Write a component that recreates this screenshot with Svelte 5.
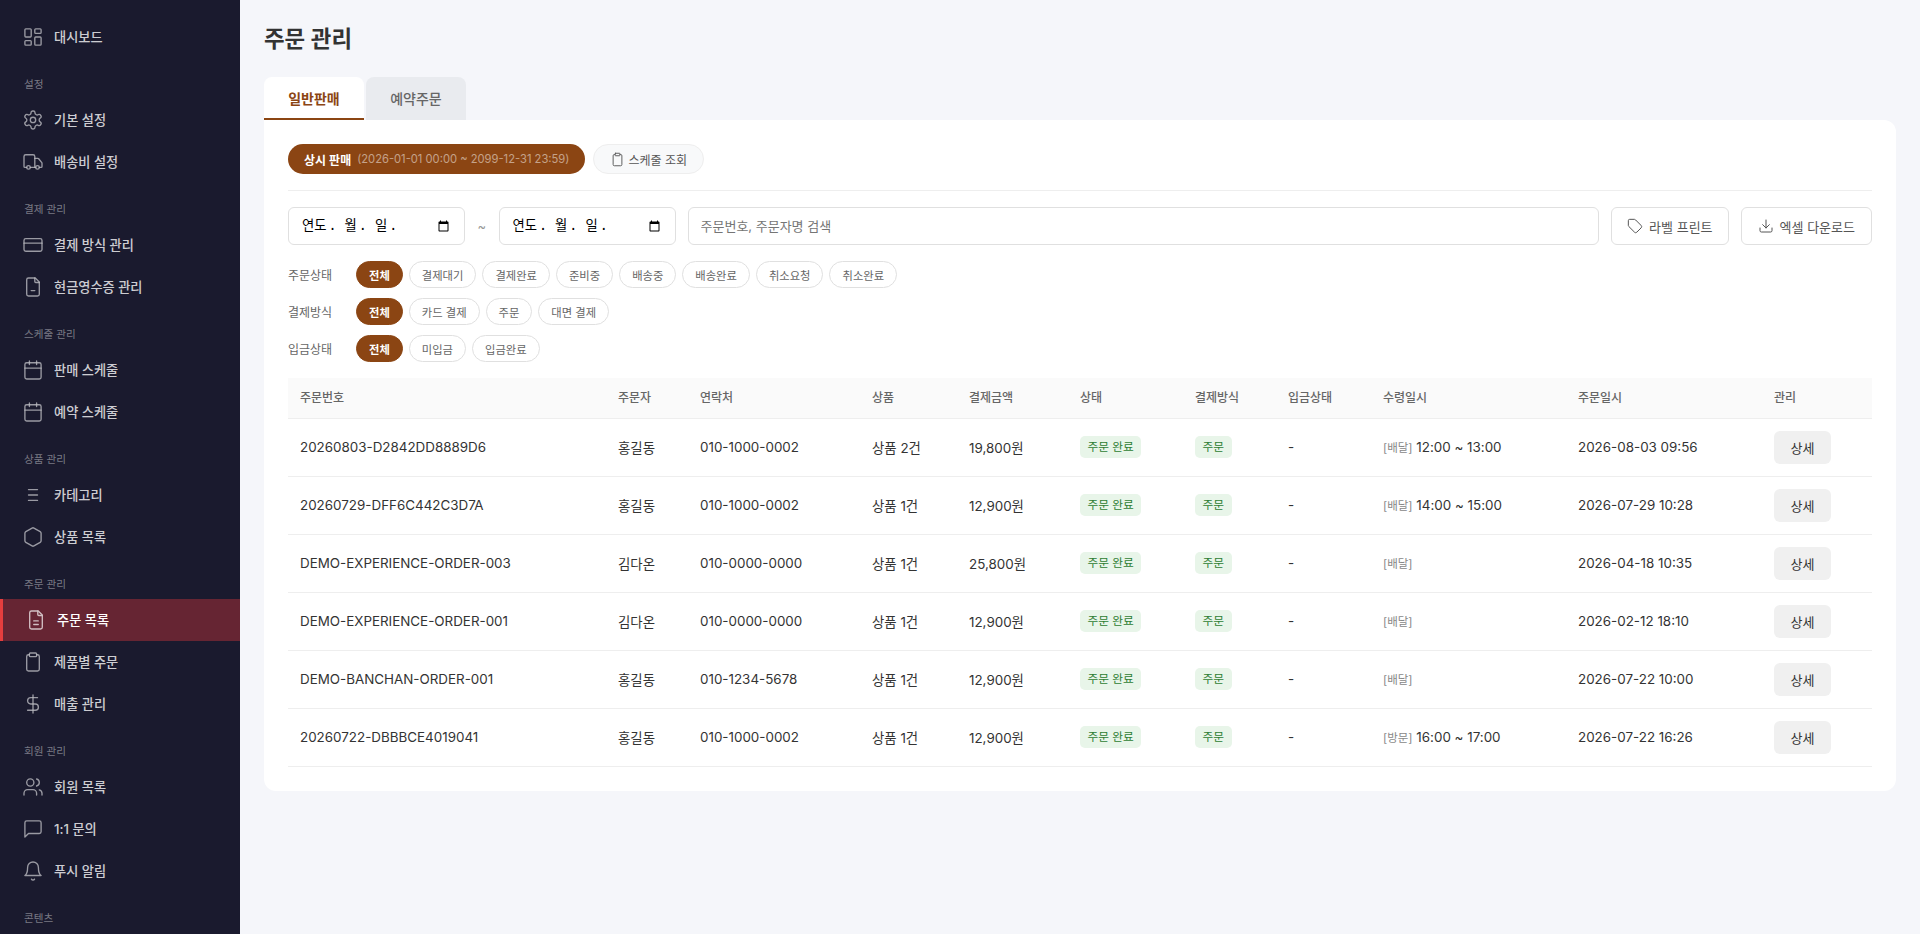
<script>
	const icons = {
		dashboard: '<rect x="3" y="3" width="7" height="9" rx="1"/><rect x="14" y="3" width="7" height="5" rx="1"/><rect x="14" y="12" width="7" height="9" rx="1"/><rect x="3" y="16" width="7" height="5" rx="1"/>',
		gear: '<path d="M12.22 2h-.44a2 2 0 0 0-2 2v.18a2 2 0 0 1-1 1.73l-.43.25a2 2 0 0 1-2 0l-.15-.08a2 2 0 0 0-2.73.73l-.22.38a2 2 0 0 0 .73 2.73l.15.1a2 2 0 0 1 1 1.72v.51a2 2 0 0 1-1 1.74l-.15.09a2 2 0 0 0-.73 2.73l.22.38a2 2 0 0 0 2.73.73l.15-.08a2 2 0 0 1 2 0l.43.25a2 2 0 0 1 1 1.73V20a2 2 0 0 0 2 2h.44a2 2 0 0 0 2-2v-.18a2 2 0 0 1 1-1.73l.43-.25a2 2 0 0 1 2 0l.15.08a2 2 0 0 0 2.73-.73l.22-.39a2 2 0 0 0-.73-2.73l-.15-.08a2 2 0 0 1-1-1.74v-.5a2 2 0 0 1 1-1.74l.15-.09a2 2 0 0 0 .73-2.73l-.22-.38a2 2 0 0 0-2.73-.73l-.15.08a2 2 0 0 1-2 0l-.43-.25a2 2 0 0 1-1-1.73V4a2 2 0 0 0-2-2z"/><circle cx="12" cy="12" r="3"/>',
		truck: '<path d="M14 18V6a2 2 0 0 0-2-2H4a2 2 0 0 0-2 2v11a1 1 0 0 0 1 1h2"/><path d="M15 18H9"/><path d="M19 18h2a1 1 0 0 0 1-1v-3.65a1 1 0 0 0-.22-.62l-3.48-4.35A1 1 0 0 0 17.52 8H14"/><circle cx="17" cy="18" r="2"/><circle cx="7" cy="18" r="2"/>',
		card: '<rect x="2" y="5" width="20" height="14" rx="2"/><path d="M2 10h20"/>',
		receipt: '<path d="M14.5 2H7a2 2 0 0 0-2 2v16a2 2 0 0 0 2 2h10a2 2 0 0 0 2-2V6.5z"/><path d="M14 2v4a1 1 0 0 0 1 1h4"/><path d="M10 16h4"/>',
		calendar: '<path d="M8 2v4"/><path d="M16 2v4"/><rect x="3" y="4" width="18" height="18" rx="2"/><path d="M3 10h18"/>',
		list: '<path d="M7 6h10"/><path d="M7 12h10"/><path d="M7 18h10"/>',
		box: '<path d="M21 16.2V7.8a2 2 0 0 0-1-1.73l-7-4a2 2 0 0 0-2 0l-7 4a2 2 0 0 0-1 1.73v8.4a2 2 0 0 0 1 1.73l7 4a2 2 0 0 0 2 0l7-4a2 2 0 0 0 1-1.73z"/>',
		file: '<path d="M14.5 2H7a2 2 0 0 0-2 2v16a2 2 0 0 0 2 2h10a2 2 0 0 0 2-2V6.5z"/><path d="M14 2v4a1 1 0 0 0 1 1h4"/><path d="M9.5 13h5"/><path d="M9.5 17h5"/>',
		clipboard: '<rect x="8" y="2" width="8" height="4" rx="1"/><path d="M16 4h1a2 2 0 0 1 2 2v14a2 2 0 0 1-2 2H7a2 2 0 0 1-2-2V6a2 2 0 0 1 2-2h1"/>',
		dollar: '<path d="M12 2v20"/><path d="M17 5H9.5a3.5 3.5 0 0 0 0 7h5a3.5 3.5 0 0 1 0 7H6"/>',
		users: '<path d="M16 21v-2a4 4 0 0 0-4-4H6a4 4 0 0 0-4 4v2"/><circle cx="9" cy="7" r="4"/><path d="M22 21v-2a4 4 0 0 0-3-3.87"/><path d="M16 3.13a4 4 0 0 1 0 7.75"/>',
		chat: '<path d="M21 15a2 2 0 0 1-2 2H7l-4 4V5a2 2 0 0 1 2-2h14a2 2 0 0 1 2 2z"/>',
		bell: '<path d="M10.3 21a1.94 1.94 0 0 0 3.4 0"/><path d="M6 8a6 6 0 0 1 12 0c0 7 3 9 3 9H3s3-2 3-9"/>',
		tag: '<path d="M12.6 2.6A2 2 0 0 0 11.2 2H4a2 2 0 0 0-2 2v7.2a2 2 0 0 0 .6 1.4l8.7 8.7a2.4 2.4 0 0 0 3.4 0l6.6-6.6a2.4 2.4 0 0 0 0-3.4z"/>',
		download: '<path d="M21 15v4a2 2 0 0 1-2 2H5a2 2 0 0 1-2-2v-4"/><path d="M7 10l5 5 5-5"/><path d="M12 15V3"/>'
	};

	const menu = [
		{ items: [{ icon: 'dashboard', label: '대시보드' }] },
		{ title: '설정', items: [{ icon: 'gear', label: '기본 설정' }, { icon: 'truck', label: '배송비 설정' }] },
		{ title: '결제 관리', items: [{ icon: 'card', label: '결제 방식 관리' }, { icon: 'receipt', label: '현금영수증 관리' }] },
		{ title: '스케줄 관리', items: [{ icon: 'calendar', label: '판매 스케줄' }, { icon: 'calendar', label: '예약 스케줄' }] },
		{ title: '상품 관리', items: [{ icon: 'list', label: '카테고리' }, { icon: 'box', label: '상품 목록' }] },
		{ title: '주문 관리', items: [{ icon: 'file', label: '주문 목록', active: true }, { icon: 'clipboard', label: '제품별 주문' }, { icon: 'dollar', label: '매출 관리' }] },
		{ title: '회원 관리', items: [{ icon: 'users', label: '회원 목록' }, { icon: 'chat', label: '1:1 문의' }, { icon: 'bell', label: '푸시 알림' }] },
		{ title: '콘텐츠', items: [] }
	];

	const filters = [
		{ label: '주문상태', options: ['전체', '결제대기', '결제완료', '준비중', '배송중', '배송완료', '취소요청', '취소완료'] },
		{ label: '결제방식', options: ['전체', '카드 결제', '주문', '대면 결제'] },
		{ label: '입금상태', options: ['전체', '미입금', '입금완료'] }
	];

	const columns = ['주문번호', '주문자', '연락처', '상품', '결제금액', '상태', '결제방식', '입금상태', '수령일시', '주문일시', '관리'];
	const widths = [318, 82, 172, 97, 111, 115, 93, 95, 195, 196, 110];

	const orders = [
		{ no: '20260803-D2842DD8889D6', name: '홍길동', phone: '010-1000-0002', goods: '상품 2건', amount: '19,800원', kind: '배달', time: '12:00 ~ 13:00', at: '2026-08-03 09:56' },
		{ no: '20260729-DFF6C442C3D7A', name: '홍길동', phone: '010-1000-0002', goods: '상품 1건', amount: '12,900원', kind: '배달', time: '14:00 ~ 15:00', at: '2026-07-29 10:28' },
		{ no: 'DEMO-EXPERIENCE-ORDER-003', name: '김다온', phone: '010-0000-0000', goods: '상품 1건', amount: '25,800원', kind: '배달', time: '', at: '2026-04-18 10:35' },
		{ no: 'DEMO-EXPERIENCE-ORDER-001', name: '김다온', phone: '010-0000-0000', goods: '상품 1건', amount: '12,900원', kind: '배달', time: '', at: '2026-02-12 18:10' },
		{ no: 'DEMO-BANCHAN-ORDER-001', name: '홍길동', phone: '010-1234-5678', goods: '상품 1건', amount: '12,900원', kind: '배달', time: '', at: '2026-07-22 10:00' },
		{ no: '20260722-DBBBCE4019041', name: '홍길동', phone: '010-1000-0002', goods: '상품 1건', amount: '12,900원', kind: '방문', time: '16:00 ~ 17:00', at: '2026-07-22 16:26' }
	];
</script>

<div class="layout">
	<aside class="sidebar">
		{#each menu as group}
			{#if group.title}
				<div class="group-title">{group.title}</div>
			{/if}
			{#each group.items as item}
				<div class="nav-item" class:active={item.active}>
					<svg class="nav-icon" viewBox="2 2 20 20">{@html icons[item.icon]}</svg>
					<span>{item.label}</span>
				</div>
			{/each}
		{/each}
	</aside>

	<main class="main">
		<h1>주문 관리</h1>

		<div class="tabs">
			<button class="tab selected">일반판매</button>
			<button class="tab">예약주문</button>
		</div>

		<section class="card">
			<div class="schedule-row">
				<div class="schedule-pill"><strong>상시 판매</strong><span>(2026-01-01 00:00 ~ 2099-12-31 23:59)</span></div>
				<button class="schedule-btn">
					<svg viewBox="0 0 24 24">{@html icons.clipboard}</svg>
					스케줄 조회
				</button>
			</div>

			<div class="search-row">
				{#each [0, 1] as i}
					{#if i}<span class="tilde">~</span>{/if}
					<label class="date">
						<input type="date" />
						<!-- the sandbox browser has no Korean locale, so the field text sits over the native input -->
						<span class="date-text"><i>연도</i>. <i>월</i>. <i>일</i>.</span>
					</label>
				{/each}
				<input class="search" type="text" placeholder="주문번호, 주문자명 검색" />
				<button class="action">
					<svg viewBox="0 0 24 24">{@html icons.tag}</svg>
					라벨 프린트
				</button>
				<button class="action excel">
					<svg viewBox="0 0 24 24">{@html icons.download}</svg>
					엑셀 다운로드
				</button>
			</div>

			{#each filters as filter}
				<div class="filter-row">
					<span class="filter-label">{filter.label}</span>
					{#each filter.options as option, i}
						<button class="chip" class:on={i === 0}>{option}</button>
					{/each}
				</div>
			{/each}

			<table>
				<colgroup>
					{#each widths as w}
						<col style="width: {w}px" />
					{/each}
				</colgroup>
				<thead>
					<tr>
						{#each columns as column}
							<th>{column}</th>
						{/each}
					</tr>
				</thead>
				<tbody>
					{#each orders as order}
						<tr>
							<td>{order.no}</td>
							<td>{order.name}</td>
							<td>{order.phone}</td>
							<td>{order.goods}</td>
							<td>{order.amount}</td>
							<td><span class="badge">주문 완료</span></td>
							<td><span class="badge">주문</span></td>
							<td>-</td>
							<td><span class="kind">[{order.kind}]</span> {order.time}</td>
							<td>{order.at}</td>
							<td><button class="detail">상세</button></td>
						</tr>
					{/each}
				</tbody>
			</table>
		</section>
	</main>
</div>

<style>
	:global(body) {
		margin: 0;
		font-family: "Inter", "Noto Sans CJK KR", sans-serif;
		color: #333;
		background: #f5f6fa;
	}

	button {
		font-family: inherit;
		cursor: pointer;
	}

	.layout {
		display: flex;
		height: 934px;
		overflow: hidden;
	}

	.sidebar {
		width: 240px;
		flex-shrink: 0;
		background: #1a1a2e;
		overflow: hidden;
		padding-top: 16px;
		box-sizing: border-box;
	}

	.group-title {
		margin-top: 13px;
		padding: 0 24px;
		height: 28px;
		line-height: 28px;
		font-size: 10.6px;
		color: rgba(255, 255, 255, 0.42);
	}

	.nav-item {
		display: flex;
		align-items: center;
		gap: 12px;
		height: 42px;
		padding: 0 24px;
		font-size: 13.2px;
		font-weight: 500;
		color: rgba(255, 255, 255, 0.8);
	}

	.nav-item span {
		padding-bottom: 1px;
	}

	.nav-item.active {
		border-left: 3px solid #e53e3e;
		background: #662533;
		color: #fff;
	}

	.nav-icon {
		width: 18px;
		height: 18px;
		flex-shrink: 0;
		overflow: visible;
		fill: none;
		stroke: currentColor;
		stroke-width: 1.5;
		stroke-linecap: round;
		stroke-linejoin: round;
		opacity: 0.7;
	}

	.main {
		flex: 1;
		min-width: 0;
		padding: 24px;
	}

	h1 {
		margin: 0 0 24px;
		font-size: 22.4px;
		line-height: 29px;
		font-weight: 600;
		color: #333;
	}

	.tabs {
		display: flex;
		gap: 2px;
	}

	.tab {
		width: 100px;
		height: 43px;
		padding: 0;
		border: none;
		border-bottom: 2px solid transparent;
		border-radius: 8px 8px 0 0;
		background: #e9ebef;
		font-size: 14px;
		font-weight: 500;
		color: #666;
	}

	.tab.selected {
		background: #fff;
		border-bottom-color: #8b4513;
		font-weight: 600;
		color: #8b4513;
	}

	.card {
		background: #fff;
		border-radius: 0 12px 12px 12px;
		padding: 24px;
	}

	.schedule-row {
		display: flex;
		align-items: center;
		gap: 8px;
		padding-bottom: 16px;
		border-bottom: 1px solid #eee;
		margin-bottom: 16px;
	}

	.schedule-pill {
		display: flex;
		align-items: center;
		gap: 6px;
		height: 30px;
		padding: 0 16px;
		border-radius: 15px;
		background: #8b4513;
		font-size: 12px;
		color: #fff;
		white-space: nowrap;
	}

	.schedule-pill strong {
		font-weight: 600;
	}

	.schedule-pill span {
		font-size: 11.2px;
		color: rgba(255, 255, 255, 0.5);
	}

	.schedule-btn {
		display: flex;
		align-items: center;
		gap: 3px;
		height: 30px;
		padding: 0 16px;
		border: 1px solid #eee;
		border-radius: 15px;
		background: #f8f9fa;
		font-size: 12px;
		color: #555;
	}

	.schedule-btn svg,
	.action svg {
		fill: none;
		stroke: currentColor;
		stroke-width: 1.5;
		stroke-linecap: round;
		stroke-linejoin: round;
		flex-shrink: 0;
	}

	.schedule-btn svg {
		width: 15px;
		height: 15px;
	}

	.search-row {
		display: flex;
		align-items: center;
		gap: 12px;
		margin-bottom: 16px;
	}

	.date {
		position: relative;
		display: block;
		width: 177px;
		height: 38px;
		flex-shrink: 0;
	}

	.date input,
	.search {
		height: 38px;
		box-sizing: border-box;
		border: 1px solid #e0e0e0;
		border-radius: 6px;
		padding: 0 12px;
		background: #fff;
		font-size: 13px;
	}

	.date input {
		width: 100%;
	}

	.date input::-webkit-datetime-edit {
		visibility: hidden;
	}

	.date-text {
		position: absolute;
		left: 14px;
		top: 0;
		line-height: 38px;
		font-family: "DejaVu Sans Mono", "Noto Sans CJK KR", monospace;
		font-size: 13.33px;
		color: #000;
		white-space: pre;
		pointer-events: none;
	}

	.date-text i {
		font-style: normal;
		padding-right: 2px;
	}

	.search {
		flex: 1;
		min-width: 0;
		font-family: inherit;
	}

	.search::placeholder {
		color: #757575;
	}

	.tilde {
		width: 9.5px;
		text-align: center;
		font-size: 13px;
		color: #999;
	}

	.action {
		display: flex;
		align-items: center;
		justify-content: center;
		gap: 6px;
		height: 38px;
		padding: 0 15px;
		border: 1px solid #e0e0e0;
		border-radius: 6px;
		background: #fff;
		font-size: 13px;
		color: #555;
		white-space: nowrap;
	}

	.action.excel {
		padding: 0 16px;
	}

	.action svg {
		width: 16px;
		height: 16px;
	}

	.filter-row {
		display: flex;
		align-items: center;
		gap: 6px;
		height: 27px;
		margin-bottom: 10px;
	}

	.filter-label {
		width: 62px;
		font-size: 12px;
		color: #666;
	}

	.chip {
		height: 27px;
		padding: 0 12px;
		border: 1px solid #e0e0e0;
		border-radius: 14px;
		background: #fff;
		font-size: 11.3px;
		color: #666;
		white-space: nowrap;
	}

	.chip.on {
		border-color: #8b4513;
		background: #8b4513;
		font-weight: 600;
		color: #fff;
	}

	table {
		width: 100%;
		table-layout: fixed;
		border-collapse: collapse;
		margin-top: 16px;
		font-size: 13.4px;
	}

	th {
		height: 40px;
		box-sizing: border-box;
		padding: 0 12px 2px;
		text-align: left;
		font-size: 12px;
		font-weight: 500;
		color: #666;
		background: #fafafa;
		border-bottom: 1px solid #eee;
	}

	td {
		height: 57px;
		padding: 0 12px;
		border-bottom: 1px solid #eee;
		color: #333;
		white-space: nowrap;
	}

	.badge {
		display: inline-block;
		height: 22px;
		line-height: 22px;
		padding: 0 7.5px;
		border-radius: 5px;
		background: #e8f5e9;
		font-size: 11.7px;
		color: #2e7d32;
		vertical-align: middle;
	}

	.kind {
		font-size: 11.5px;
		color: #888;
	}

	.detail {
		width: 57px;
		height: 33px;
		padding: 0;
		border: none;
		border-radius: 6px;
		background: #f0f0f0;
		font-size: 13px;
		color: #333;
	}
</style>
